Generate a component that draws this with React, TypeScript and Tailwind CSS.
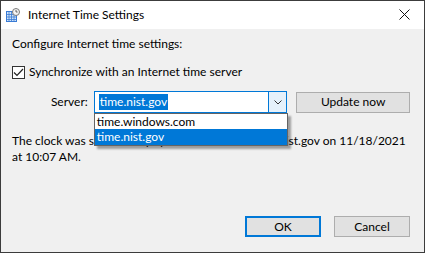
import React from "react";

function AppIcon() {
  return (
    <svg width="14" height="14" viewBox="0 0 14 14">
      <rect x="0.5" y="3.5" width="10" height="10" fill="#cfe3f7" stroke="#3a7bd5" />
      <path d="M0.5 6.5h10M0.5 9h10M0.5 11.5h10M3 3.5v10M5.5 3.5v10M8 3.5v10" stroke="#3a7bd5" strokeWidth="0.8" />
      <circle cx="10" cy="4" r="3.5" fill="#f4f4f4" stroke="#7a7a7a" />
      <path d="M10 2v2h1.6" stroke="#444" strokeWidth="0.8" fill="none" />
    </svg>
  );
}

function Chevron() {
  return (
    <svg width="8" height="5" viewBox="0 0 8 5">
      <path d="M0.5 0.5L4 4L7.5 0.5" stroke="#333" fill="none" strokeWidth="1" />
    </svg>
  );
}

export default function App() {
  return (
    <div
      className="w-[425px] h-[253px] border border-[#3c3c3c] bg-[#f0f0f0] flex flex-col text-[12px] leading-4 text-black"
      style={{ fontFamily: 'Lato, "Noto Sans", sans-serif' }}
    >
      <div className="h-[28px] bg-white flex items-center shrink-0">
        <div className="ml-[5px] mt-[-1px]">
          <AppIcon />
        </div>
        <span className="ml-[8px] text-[12px]">Internet Time Settings</span>
        <span className="ml-auto mr-[14px] mt-[-2px]">
          <svg width="11" height="11" viewBox="0 0 11 11">
            <path d="M0.5 0.5l10 10M10.5 0.5l-10 10" stroke="#111" strokeWidth="1" />
          </svg>
        </span>
      </div>

      <div className="flex flex-col pl-[11px] pr-[14px] flex-1">
        <p className="mt-[7px]">Configure Internet time settings:</p>

        <label className="mt-[12px] flex items-center gap-[4px]">
          <span className="w-[13px] h-[13px] border border-[#333] bg-white flex items-center justify-center">
            <svg width="11" height="9" viewBox="0 0 11 9">
              <path d="M1 4.5l3 3L10 1" stroke="#222" strokeWidth="1.2" fill="none" />
            </svg>
          </span>
          <span>Synchronize with an Internet time server</span>
        </label>

        <div className="mt-[11px] flex items-center">
          <span className="w-[76px] text-right">Server:</span>
          <div className="ml-[6px] relative w-[194px] h-[22px] border border-[#0078d7] bg-white flex items-center">
            <span className="ml-[4px] bg-[#0078d7] text-white px-[1px] h-[16px]">time.nist.gov</span>
            <span className="ml-auto w-[18px] h-full bg-[#e5f1fb] border-l border-[#0078d7] flex items-center justify-center">
              <Chevron />
            </span>
            <div className="absolute left-[-1px] top-[21px] w-[194px] border border-[#646464] bg-white shadow-[3px_3px_2px_rgba(0,0,0,0.35)] flex flex-col z-10">
              <span className="h-[15px] px-[2px] leading-[15px]">time.windows.com</span>
              <span className="h-[16px] px-[2px] leading-[16px] bg-[#0078d7] text-white">time.nist.gov</span>
            </div>
          </div>
          <button className="ml-[9px] w-[114px] h-[21px] bg-[#e1e1e1] border border-[#adadad] text-[12px]">
            Update now
          </button>
        </div>

        <p className="mt-[20px] w-[395px]">
          The clock was successfully synchronized with time.nist.gov on 11/18/2021 at 10:07 AM.
        </p>

        <div className="mt-auto mb-[15px] flex justify-end gap-[13px]">
          <button className="w-[76px] h-[21px] bg-[#e1e1e1] border-2 border-[#0078d7] text-[12px]">OK</button>
          <button className="w-[76px] h-[21px] bg-[#e1e1e1] border border-[#adadad] text-[12px]">Cancel</button>
        </div>
      </div>
    </div>
  );
}
